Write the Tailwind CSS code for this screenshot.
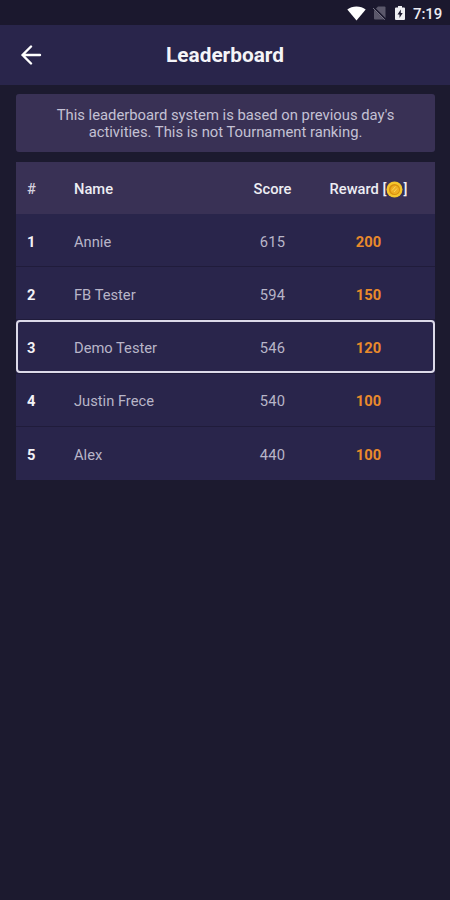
<!DOCTYPE html>
<html lang="en">
<head>
  <meta charset="UTF-8" />
  <meta name="viewport" content="width=device-width, initial-scale=1.0" />
  <title>Leaderboard</title>
  <script src="https://cdn.jsdelivr.net/npm/@tailwindcss/browser@4"></script>
</head>
<body class="bg-[#1c1a2f] font-[Roboto,sans-serif] text-white h-screen overflow-hidden">
  <!-- Status bar -->
  <div class="h-[25px] bg-[#1b182e] flex items-center justify-end pr-2">
    <svg class="w-[19px] h-[15px] mr-[7px] mt-px" viewBox="0 0 19 15" fill="#fff">
      <path d="M9.5 14.5 0.3 3.6C2.8 1.7 6 0.6 9.5 0.6s6.700 1.100 9.200 3z" />
    </svg>
    <svg class="w-[13px] h-[14px] mr-[9px] mt-px" viewBox="0 0 13 14">
      <path d="M5 0.500h6.500a1 1 0 0 1 1 1v11a1 1 0 0 1-1 1h-9.500a1 1 0 0 1-1-1V4.500z" fill="#5b586b" />
      <path d="M0.500 1.500 12.500 13.500" stroke="#1b182e" stroke-width="2" />
      <path d="M0 2 11.800 13.800" stroke="#777486" stroke-width="1" />
    </svg>
    <svg class="w-[10px] h-[14px] mr-[8px] mt-px" viewBox="0 0 10 14">
      <path d="M3 0h4v1.500h2a1 1 0 0 1 1 1V13a1 1 0 0 1-1 1H1a1 1 0 0 1-1-1V2.500a1 1 0 0 1 1-1h2z" fill="#efeff3" />
      <path d="M5.800 3.600 2.500 8.400h2v3.500l3.200-5H5.800z" fill="#1b182e" />
    </svg>
    <span class="text-[15px] leading-[25px] font-medium text-[#ececf2] w-[29px] whitespace-nowrap tracking-[-0.1px] pt-[3px]">7:19</span>
  </div>

  <!-- Header -->
  <header class="h-[60px] bg-[#29254b] grid grid-cols-[62px_1fr_62px] items-center">
    <svg class="w-[22px] h-[20px] ml-[20px]" viewBox="0 0 22 20" fill="none" stroke="#fff" stroke-width="2.400" stroke-linecap="round" stroke-linejoin="round">
      <path d="M20 10H2.500M11 1.500 2.500 10l8.500 8.500" />
    </svg>
    <h1 class="text-center text-[20.8px] font-bold text-[#f4f4f8] pt-[2px]">Leaderboard</h1>
  </header>

  <main class="px-4 pt-[9px]">
    <p class="w-[419px] h-[58px] pt-[2px] rounded-[3px] bg-[#393155] flex flex-col items-center justify-center text-[14.8px] leading-[17px] text-[#c4c1d4] whitespace-nowrap">
      <span>This leaderboard system is based on previous day's</span>
      <span>activities. This is not Tournament ranking.</span>
    </p>

    <!-- Leaderboard table -->
    <section class="mt-[10px] w-[419px] text-[14.7px]">
      <div class="h-[52px] pt-[3px] bg-[#393155] grid grid-cols-[58px_151px_95px_97px] items-center font-medium text-[#ededf3]">
        <span class="pl-[11px] text-[#d3d0de]">#</span>
        <span>Name</span>
        <span class="text-center">Score</span>
        <span class="flex items-center justify-center whitespace-nowrap">Reward&nbsp;[<svg class="w-[17px] h-[17px] mt-px" viewBox="0 0 17 17">
            <circle cx="8.500" cy="8.500" r="8" fill="#f5c62c" />
            <circle cx="8.500" cy="8.500" r="5.600" fill="#d8900f" />
            <circle cx="8.800" cy="8.800" r="4.300" fill="#efaf22" />
            <path d="M6 9.500 9.500 5.500M8 11 11 7.500" stroke="#f9d65a" stroke-width="1" />
          </svg>]</span>
      </div>
      <div id="rows"></div>
    </section>
  </main>

  <script>
    const players = [
      { name: "Annie", score: 615, reward: 200 },
      { name: "FB Tester", score: 594, reward: 150 },
      { name: "Demo Tester", score: 546, reward: 120, me: true },
      { name: "Justin Frece", score: 540, reward: 100 },
      { name: "Alex", score: 440, reward: 100 },
    ];

    document.getElementById("rows").innerHTML = players.map((p, i) => `
      <div class="relative h-[53.2px] pt-[3px] bg-[#29254b] grid grid-cols-[58px_151px_95px_97px] items-center ${i < players.length - 1 ? "border-b border-[#201c3b]" : ""}">
        <span class="pl-[11px] font-bold text-[#f2f2f6]">${i + 1}</span>
        <span class="text-[#b8b5c8]">${p.name}</span>
        <span class="text-center text-[#b8b5c8] tracking-[0.2px]">${p.score}</span>
        <span class="text-center font-bold text-[#e98a2b]">${p.reward}</span>
        ${p.me ? `<div class="absolute inset-0 border-2 border-[#dcdae9] rounded-[4px]"></div>` : ""}
      </div>
    `).join("");
  </script>
</body>
</html>
